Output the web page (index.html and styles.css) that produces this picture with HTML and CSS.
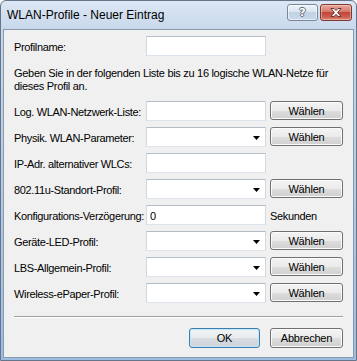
FILE: index.html
```html
<!DOCTYPE html>
<html lang="de">
<head>
<meta charset="utf-8">
<title>WLAN-Profile - Neuer Eintrag</title>
<link rel="stylesheet" href="styles.css">
</head>
<body>
<div class="window">
  <div class="titlebar">
    <span class="title">WLAN-Profile - Neuer Eintrag</span>
    <div class="tbtns">
      <div class="tbtn help"><span class="q">?</span></div>
      <div class="tbtn close">
        <svg width="12" height="9" viewBox="0 0 12 9"><path d="M1 0.5 H4 L6 2.6 L8 0.5 H11 L7.6 4.5 L11 8.5 H8 L6 6.4 L4 8.5 H1 L4.4 4.5 Z" fill="#fff" stroke="#5a2d2a" stroke-width="0.9" stroke-linejoin="round"/></svg>
      </div>
    </div>
  </div>
  <div class="client">
    <div class="grid">
      <span class="lbl">Profilname:</span>
      <div class="field"></div>
    </div>
    <p class="info">Geben Sie in der folgenden Liste bis zu 16 logische WLAN-Netze für<br>dieses Profil an.</p>
    <div class="grid rows">
      <span class="lbl">Log. WLAN-Netzwerk-Liste:</span>
      <div class="field"></div>
      <div class="btn">Wählen</div>

      <span class="lbl">Physik. WLAN-Parameter:</span>
      <div class="field combo"><svg class="arrow" width="7" height="4" viewBox="0 0 7 4"><path d="M0 0H7L3.5 4Z" fill="#000"/></svg></div>
      <div class="btn">Wählen</div>

      <span class="lbl">IP-Adr. alternativer WLCs:</span>
      <div class="field"></div>
      <span></span>

      <span class="lbl">802.11u-Standort-Profil:</span>
      <div class="field combo"><svg class="arrow" width="7" height="4" viewBox="0 0 7 4"><path d="M0 0H7L3.5 4Z" fill="#000"/></svg></div>
      <div class="btn">Wählen</div>

      <span class="lbl">Konfigurations-Verzögerung:</span>
      <div class="field"><span class="val">0</span></div>
      <span class="unit">Sekunden</span>

      <span class="lbl">Geräte-LED-Profil:</span>
      <div class="field combo"><svg class="arrow" width="7" height="4" viewBox="0 0 7 4"><path d="M0 0H7L3.5 4Z" fill="#000"/></svg></div>
      <div class="btn">Wählen</div>

      <span class="lbl">LBS-Allgemein-Profil:</span>
      <div class="field combo"><svg class="arrow" width="7" height="4" viewBox="0 0 7 4"><path d="M0 0H7L3.5 4Z" fill="#000"/></svg></div>
      <div class="btn">Wählen</div>

      <span class="lbl">Wireless-ePaper-Profil:</span>
      <div class="field combo"><svg class="arrow" width="7" height="4" viewBox="0 0 7 4"><path d="M0 0H7L3.5 4Z" fill="#000"/></svg></div>
      <div class="btn">Wählen</div>
    </div>
    <div class="sep"></div>
    <div class="actions">
      <div class="btn default">OK</div>
      <div class="btn">Abbrechen</div>
    </div>
  </div>
</div>
</body>
</html>
```

FILE: styles.css
```css
html, body {
  margin: 0;
  padding: 0;
  background: #ffffff;
}

body {
  font-family: "Liberation Sans", Arial, sans-serif;
  font-size: 11px;
  color: #000;
}

.window {
  box-sizing: border-box;
  width: 357px;
  height: 361px;
  border: 1px solid #66758a;
  border-radius: 6px 6px 0 0;
  background: linear-gradient(#dce7f4 0px, #c8d8eb 28px, #b3c9e5 200px, #9dbce2 360px);
  display: flex;
  flex-direction: column;
}

.titlebar {
  height: 28px;
  display: flex;
  align-items: flex-start;
  padding: 0 4px 0 6px;
  flex: none;
}

.title {
  font-size: 12px;
  line-height: 28px;
  color: #000;
  white-space: nowrap;
}

.tbtns {
  margin-left: auto;
  margin-top: 3px;
  display: flex;
  gap: 2px;
}

.tbtn {
  box-sizing: border-box;
  height: 17px;
  border-radius: 3px;
  display: flex;
  align-items: center;
  justify-content: center;
}

.help {
  width: 31px;
  border: 1px solid #7a8899;
  background: linear-gradient(#eef3f9 0%, #dbe5f0 45%, #c3d2e3 50%, #c9d8ea 100%);
  box-shadow: inset 0 0 0 1px rgba(255,255,255,0.55);
}

.q {
  font-family: "DejaVu Sans", sans-serif;
  font-weight: bold;
  font-size: 11px;
  line-height: 13px;
  color: #fff;
  text-shadow: -1px 0 #5e6c7e, 1px 0 #5e6c7e, 0 -1px #5e6c7e, 0 1px #5e6c7e;
}

.close {
  width: 32px;
  border: 1px solid #7b3a33;
  background: linear-gradient(#e9a99c 0%, #d6796b 45%, #c2463a 50%, #cd5e4f 80%, #dc8a73 100%);
  box-shadow: inset 0 0 0 1px rgba(255,220,210,0.45);
}

.client {
  flex: 1;
  margin: 0 2px 2px 2px;
  border: 1px solid #8898ad;
  background: #f0f0f0;
  padding: 6px 10px 0 10px;
  display: flex;
  flex-direction: column;
}

.grid {
  display: grid;
  grid-template-columns: 128px 120px 73px;
  column-gap: 4px;
  row-gap: 6px;
  grid-auto-rows: 20px;
}

.lbl, .unit {
  line-height: 20px;
  padding-top: 1px;
  white-space: nowrap;
  letter-spacing: -0.35px;
  height: 20px;
  box-sizing: border-box;
}

.field {
  box-sizing: border-box;
  height: 20px;
  background: #fff;
  border: 1px solid;
  border-color: #b4becb #d2d9e3 #dde3ea #d2d9e3;
  position: relative;
  display: flex;
  align-items: center;
}

.val {
  padding-left: 3px;
  padding-top: 1px;
}

.arrow {
  position: absolute;
  right: 5px;
  top: 8px;
}

.info {
  margin: 11px 0 0 0;
  line-height: 13px;
  letter-spacing: -0.3px;
  white-space: nowrap;
}

.rows {
  margin-top: 8px;
}

.btn {
  box-sizing: border-box;
  height: 19px;
  border: 1px solid #707070;
  border-radius: 3px;
  background: linear-gradient(#f3f3f3 0%, #ebebeb 50%, #dddddd 51%, #d0d0d0 100%);
  box-shadow: inset 0 0 0 1px #fbfbfb;
  display: flex;
  align-items: center;
  justify-content: center;
  line-height: 17px;
  letter-spacing: -0.2px;
  padding-top: 1px;
}

.sep {
  margin-top: 13px;
  height: 1px;
  background: #a0a0a0;
  border-bottom: 1px solid #ffffff;
  width: 329px;
}

.actions {
  margin-top: 10px;
  display: flex;
  justify-content: flex-end;
  gap: 10px;
  width: 329px;
}

.actions .btn {
  width: 71px;
  height: 20px;
}

.actions .btn + .btn {
  width: 73px;
}

.btn.default {
  border-color: #3c7fb1;
  box-shadow: inset 0 0 0 1px #c4e6f6;
  background: linear-gradient(#f1f4f6 0%, #e8ecef 50%, #d8dee3 51%, #ccd3d9 100%);
}
```
